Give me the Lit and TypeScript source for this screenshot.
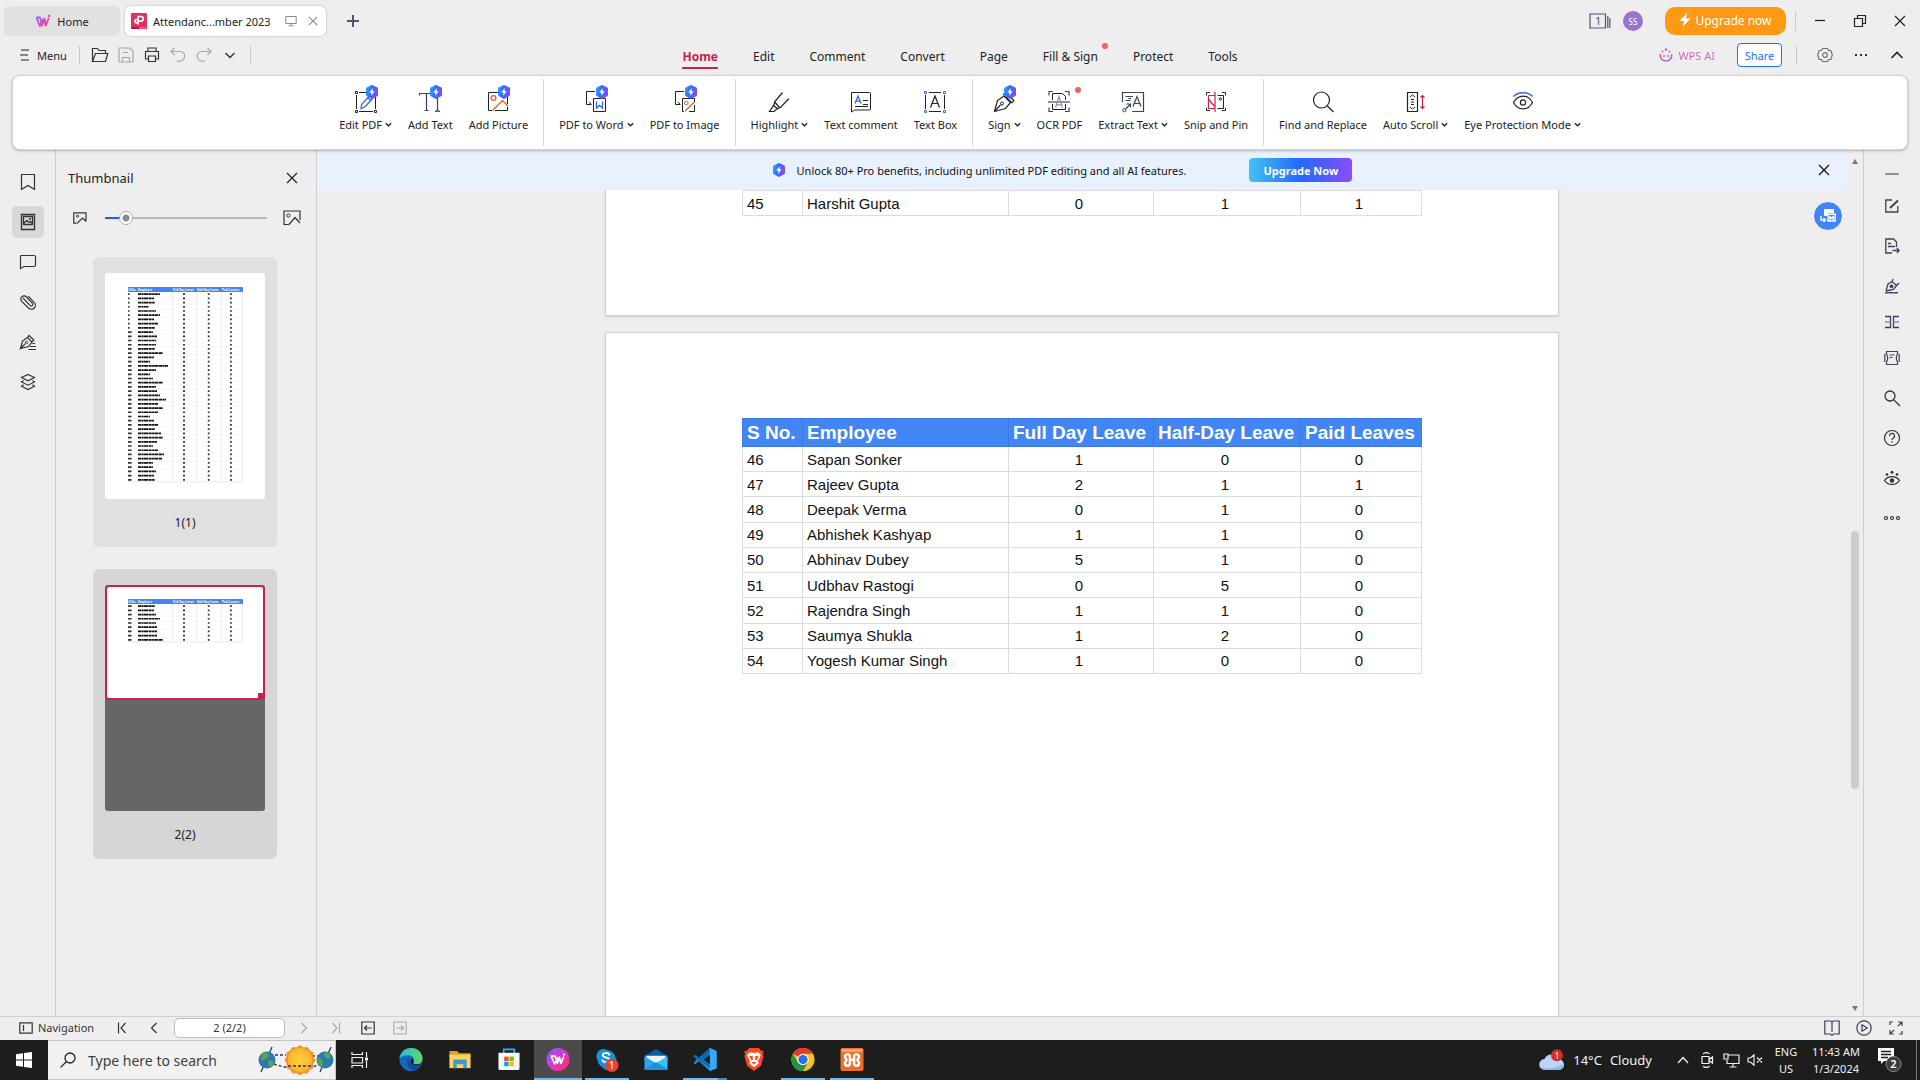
import { LitElement, html, css, svg, nothing, TemplateResult, SVGTemplateResult } from "lit";
import { customElement, property } from "lit/decorators.js";
import { classMap } from "lit/directives/class-map.js";

type Shape = SVGTemplateResult;

interface Command {
  label: string;
  icon: string;
  menu?: boolean;
  pro?: boolean;
  dot?: boolean;
}

interface LeaveRow {
  no: number;
  name: string;
  full: number;
  half: number;
  paid: number;
}

/* Draws a line icon: w x h is both its size on screen and its own coordinate space. */
const draw = (w: number, h: number, body: Shape, cls = "ico"): TemplateResult => html`
  <svg class=${cls} width=${w} height=${h} viewBox="0 0 ${w} ${h}" fill="none" stroke="currentColor" aria-hidden="true">${body}</svg>
`;

const bolt = svg`
  <path d="M7 0.5 L12.5 3 V10.5 L7 13.5 L1.5 10.5 V3 Z" fill="url(#hexfill)" stroke="url(#hexfill)" stroke-width="1" stroke-linejoin="round"/>
  <path d="M7.8 3 L4.2 7.6 H6.4 L6 11 L9.8 6.3 H7.5 Z" fill="#fff" stroke="none"/>
`;

const hexDefs = svg`<defs><linearGradient id="hexfill" x1="0" y1="0" x2="1" y2="0.3">
  <stop offset="0" stop-color="#2fa8ff"/><stop offset="0.5" stop-color="#2d6bff"/><stop offset="1" stop-color="#7a4dff"/>
</linearGradient></defs>`;

const ribbonIcons: Record<string, Shape> = {
  edit: svg`
    <path d="M4.5 10 V24 M7 7.5 H17 M23.5 12 V24 M7 26.5 H21"/>
    <path d="M3.5 6.5 h2 v2 h-2z M3.5 25.5 h2 v2 h-2z M22.5 25.5 h2 v2 h-2z"/>
    <path stroke="#3567e0" stroke-width="1.3" d="M9 23.5 L9.6 19.5 L17.5 11 L20.5 13.5 L12.8 22 Z M16 13 l2.8 2.6"/>`,
  text: svg`
    <path stroke="#39425a" stroke-width="1.2" d="M3.5 10.5 V8.5 H18 M10.5 8.5 V25.5 M8.5 25.5 H12.5"/>
    <path stroke="#39425a" stroke-width="1.2" d="M21.5 12 V25.5 M19 26.5 c1.6 0 2.5 -.6 2.5 -2 c0 1.4 .9 2 2.5 2"/>`,
  picture: svg`
    <path d="M14.5 7.5 H4.5 V25.5 H8 M23.5 12 V19"/>
    <circle cx="9.5" cy="13" r="2.4" stroke="#d9622b" stroke-width="1.3"/>
    <path stroke="#d9622b" stroke-width="1.4" d="M8.5 25.5 L18.5 15.5 L24 21"/><path d="M11 25.5 H23.5 V22"/>`,
  word: svg`
    <path d="M13 6.5 H4.5 V19.5 H9 M7 17 l2.5 2.5 M19.5 6.5 V12"/>
    <path d="M11.5 13.5 H23.5 V26.5 H11.5z"/>
    <path stroke="#3567e0" stroke-width="1.3" d="M14.5 16.5 V23 L17.5 20.4 L20.5 23 V16.5"/>`,
  image: svg`
    <path d="M13 6.5 H4.5 V19.5 H9 M7 17 l2.5 2.5 M19.5 6.5 V12"/>
    <path d="M11.5 13.5 H23.5 V17 M23.5 20 V26.5 H18 M11.5 13.5 V26.5 H13"/>
    <circle cx="15.3" cy="18" r="1.8" stroke="#d9622b"/>
    <path stroke="#d9622b" stroke-width="1.3" d="M14 26 L23.5 17"/>`,
  highlight: svg`
    <path stroke-width="1.2" d="M17.5 7.5 L9.5 17 L9 21 L12.5 23.5 L15.5 22.5 L24 13.5 M9 19.8 L4.5 26.5 H9 L12.5 23.5 M9.8 17 L14.5 22.5"/>`,
  comment: svg`
    <path d="M4.5 7.5 H22.5 a1 1 0 0 1 1 1 V24 a1 1 0 0 1 -1 1 H7.5 L4.5 27 Z"/>
    <path d="M16 15.5 H21 M16 19.5 H21 M8 21.5 H21"/>
    <path stroke="#3567e0" stroke-width="1.3" d="M8 18.5 L11 11 L14 18.5 M9 16.2 H13"/>`,
  textbox: svg`
    <path d="M4.5 10 V24 M8 7.5 H20 M23.5 10 V24 M8 26.5 H20"/>
    <path stroke="#3567e0" d="M3.5 6.5 h2 v2 h-2z M22.5 6.5 h2 v2 h-2z M3.5 25.5 h2 v2 h-2z M22.5 25.5 h2 v2 h-2z"/>
    <path stroke-width="1.2" d="M9.5 22.5 L14 11 L18.5 22.5 M11 18.5 H17"/>`,
  sign: svg`
    <path stroke-width="1.2" d="M4.5 26.5 L7.5 15.5 L14 11 L20.5 17.5 L15.5 23.5 Z M5 26 L10.5 20 M13 9 L22 18 M22 18 L23.8 15.5 L20.5 12"/>
    <circle cx="12" cy="18.5" r="1.5"/>`,
  ocr: svg`
    <path stroke-width="1.2" stroke="#39425a" d="M4 10.5 V6.5 H8 M20 6.5 H24 V10.5 M4 22.5 V26.5 H8 M20 26.5 H24 V22.5"/>
    <path d="M7.5 15 V8.5 H17.5 L20.5 11.5 V15 M7.5 19 V24.5 H20.5 V19"/>
    <path stroke="#8b93a3" stroke-width="2" d="M3 17 H25"/>
    <path stroke="#8b93a3" stroke-width="1.2" d="M10.5 22.5 L14 11.5 L17.5 22.5 M11.5 19.8 H16.5"/>`,
  extract: svg`
    <path stroke="#39425a" stroke-width="1.2" d="M3.5 17 V7.5 H24.5 V26.5 H13"/>
    <path stroke="#39425a" d="M6.5 11.5 H14 M6.5 15.5 H11.5 M9.5 13.5 H12"/>
    <path stroke="#39425a" stroke-width="1.2" d="M14 21.5 L18 11.5 L22 21.5 M15.3 18.5 H20.7 M6.5 24 L11.5 19 M7.5 19 H11.5 V22.5"/>
    <circle cx="5.3" cy="25.2" r="1.6" stroke="#39425a"/>`,
  snip: svg`
    <path stroke="#c7224e" stroke-width="1.2" d="M13 7 V27 M6.5 10.5 H13 M6.5 10.5 V23.5 H13 M6.5 14 L13 22"/>
    <path d="M4.5 10.5 V7.5 H8 M20 7.5 H23.5 V10.5 M4.5 23 V25.5 H8 M20 25.5 H23.5 V23 M15.5 10.5 H21.5 V23.5 H15.5"/>
    <circle cx="18.3" cy="14" r="1.2"/>`,
  find: svg`
    <circle cx="12.5" cy="15" r="8" stroke-width="1.2"/><path stroke-width="1.2" d="M18.2 20.8 L24.5 27"/>`,
  scroll: svg`
    <path stroke-width="1.2" d="M5.5 7.5 H15.5 V26.5 H5.5z"/>
    <path d="M8 12 L10.5 9.8 L13 12 M8 22 L10.5 24.2 L13 22 M9 14.5 H12 M9 17 H12 M9 19.5 H12"/>
    <path stroke="#c7224e" stroke-width="1.2" d="M20.5 11 V23 M18.5 12.5 L20.5 10.5 L22.5 12.5 M18.5 21.5 L20.5 23.5 L22.5 21.5"/>`,
  eye: svg`
    <path stroke="#3567e0" stroke-width="1.4" d="M4.5 11.5 C9 6.5 19 6.5 23.5 11.5"/>
    <path stroke-width="1.2" d="M4.5 17.5 C9 9 19 9 23.5 17.5 C19 26 9 26 4.5 17.5 Z"/>
    <circle cx="14" cy="17.5" r="2.6" stroke-width="1.2"/>`,
};

const icons = {
  close: draw(12, 12, svg`<path stroke-width="1.2" d="M1 1 L11 11 M11 1 L1 11"/>`),
  closeSmall: draw(10, 10, svg`<path stroke-width="1.1" d="M.8 .8 L9.2 9.2 M9.2 .8 L.8 9.2"/>`),
  chevDown: draw(12, 12, svg`<path stroke-width="1.4" d="M1.5 4 L6 8.5 L10.5 4"/>`),
  chevUp: draw(14, 12, svg`<path stroke-width="1.6" d="M1.5 9 L7 3.5 L12.5 9"/>`),
  caret: draw(7, 6, svg`<path stroke-width="1.3" d="M.8 1.2 L3.5 3.8 L6.2 1.2"/>`),
  bookmark: draw(18, 18, svg`<path stroke-width="1.2" d="M2.5 1.5 H15.5 V16.5 L9 12.5 L2.5 16.5 Z"/>`),
  thumbs: draw(18, 18, svg`<path stroke-width="1.3" d="M2.5 1.5 H15.5 V16.5 H2.5z M4.5 3.5 H13.5 V11.5 H4.5z M4.5 10.5 L8 7.5 L10 9.5 L11.5 8.5 L13.5 10.5"/><circle cx="11" cy="6" r=".7"/>`),
  bubble: draw(18, 18, svg`<path stroke-width="1.2" d="M2.5 2.5 H15 a1.5 1.5 0 0 1 1.5 1.5 V12 a1.5 1.5 0 0 1 -1.5 1.5 H5 L1.5 15.5 V3.5 a1 1 0 0 1 1 -1z"/>`),
  clip: draw(18, 18, svg`<path stroke-width="1.2" d="M4 5 L11.2 12.6 a1.6 1.6 0 0 0 2.3 -2.2 L7.5 4 a3.2 3.2 0 0 0 -4.8 4.4 L9.5 15 a3.9 3.9 0 0 0 5.8 -5.4 L9.2 3.2"/>`),
  signPen: draw(18, 18, svg`<path stroke-width="1.2" d="M1.5 15.5 L3.5 8 L8.5 4.5 L13 9 L9.5 13.5 L1.5 15.5 L6 11 M8.5 4.5 L10 2.5 L14.8 7 L13 9 M11 13.5 H17 M9.5 16.5 H17 M13.5 10.5 H16"/><circle cx="7.5" cy="9.5" r="1.2"/>`),
  layers: draw(18, 18, svg`<path stroke-width="1.2" d="M9 1.5 L15.5 4.5 L9 7.8 L2.5 4.5 Z M4.5 7.5 L2.5 9 L9 12.2 L15.5 9 L13.5 7.5 M4.5 11.8 L2.5 13.2 L9 16.5 L15.5 13.2 L13.5 11.8"/>`),
  imgSmall: draw(14, 12, svg`<path stroke-width="1.2" d="M13 9 V.8 H.8 V11.2 H3.5 M4 11.4 L9.5 6 L13.2 9.5"/><circle cx="4.6" cy="4.2" r="1.1"/>`),
  imgLarge: draw(18, 16, svg`<path stroke-width="1.2" d="M17 10 V1 H1 V14.5 H5 M5.5 15 L12 7.5 L17 13"/><circle cx="5.5" cy="5.5" r="1.6"/>`),
  plus: draw(14, 14, svg`<path stroke="#4a5878" stroke-width="2" d="M7 1 V13 M1 7 H13"/>`),
  monitor: draw(12, 12, svg`<path d="M.8 1.5 H11.2 V8.5 H.8z M6 8.5 V10.5 M3.5 10.8 H8.5"/>`),
  menu: draw(10, 12, svg`<path stroke-width="1.2" d="M1 1 H9 M0 6 H8 M1 11 H9"/>`),
  open: draw(18, 16, svg`<path stroke-width="1.2" d="M1.5 14 V1.5 H6.5 L8 3.5 H14.5 V6.5 M1.5 14.5 L4.5 6.5 H16.8 L14.5 14.5 Z"/>`),
  save: draw(18, 16, svg`<path stroke-width="1.2" d="M2 1 H13 L16 4 V15 H2z M5.5 15 V10.5 H12.5 V15 M6 5.5 H11"/>`),
  print: draw(18, 16, svg`<path stroke-width="1.2" d="M5 4.5 V1 H13 V4.5 M5 12 H2.5 V4.5 H15.5 V12 H13 M5.5 9 H12.5 V14.5 H5.5z"/>`),
  undo: draw(18, 16, svg`<path stroke-width="1.2" d="M5.5 1 L2 4.5 L5.5 8 M2 4.5 H11 a4.8 4.8 0 0 1 0 9.6 H8"/>`),
  redo: draw(18, 16, svg`<path stroke-width="1.2" d="M12.5 1 L16 4.5 L12.5 8 M16 4.5 H7 a4.8 4.8 0 0 0 0 9.6 H10"/>`),
  minimize: draw(12, 12, svg`<path stroke-width="1.2" d="M1 5.5 H11"/>`),
  restore: draw(14, 14, svg`<path stroke-width="1.2" d="M1.5 4.5 H9.5 V12.5 H1.5z M4.5 4 V1.5 H12.5 V9.5 H10"/>`),
  gear: draw(16, 16, svg`<path stroke="#6a7080" stroke-width="1.2" d="M5.5 1.5 H10.5 L11.5 3.5 H13.8 L15.3 8 L13.8 12.5 H11.5 L10.5 14.5 H5.5 L4.5 12.5 H2.2 L.7 8 L2.2 3.5 H4.5 Z"/><circle cx="8" cy="8" r="2.3" stroke="#6a7080" stroke-width="1.2"/>`),
  dots: draw(14, 4, svg`<path stroke="none" fill="#333" d="M1 1 h2 v2 h-2z M6 1 h2 v2 h-2z M11 1 h2 v2 h-2z"/>`),
  flash: draw(12, 14, svg`<path stroke="none" fill="#fff" d="M8 0 L0.5 8 H5 L3.5 14 L11.5 5.5 H7 Z"/>`),
  wpsAi: draw(14, 14, svg`
    <defs><linearGradient id="ai" x1="0" y1="0" x2="1" y2="1"><stop offset="0" stop-color="#f2616f"/><stop offset="1" stop-color="#8a6bf5"/></linearGradient></defs>
    <path stroke="url(#ai)" stroke-width="1.6" d="M1.5 6 C.5 10 3.5 13 7 13 C10.5 13 13.5 10 12.5 6"/>
    <g stroke="none" fill="#d060b8"><circle cx="5" cy="8" r="1"/><circle cx="9" cy="8" r="1"/><circle cx="3.5" cy="3.5" r="1"/><circle cx="10.5" cy="3.5" r="1"/><circle cx="7" cy="1.5" r="1.3"/></g>`),
  wpsLogo: draw(16, 14, svg`
    <defs><linearGradient id="wl" x1="0" y1="0" x2="1" y2="1"><stop offset="0" stop-color="#7d6bff"/><stop offset="0.5" stop-color="#d94fd0"/><stop offset="1" stop-color="#ff3b4e"/></linearGradient></defs>
    <path stroke="url(#wl)" stroke-width="1.9" stroke-linejoin="round" d="M1.2 3.5 H5 L7 11.5 L9.5 4.5 L10.8 11.5 L13.8 4 M1.5 3.8 L4.8 12 L8 5"/>
    <circle cx="14" cy="2" r="1.3" fill="#f2478a" stroke="none"/>`),
  pdf: draw(16, 16, svg`
    <path stroke="none" fill="#e0315c" d="M1 0 H15 a1 1 0 0 1 1 1 V14 H0 V1 a1 1 0 0 1 1 -1z"/>
    <path stroke="none" fill="#b8153f" d="M0 14 H8 V16 H1 a1 1 0 0 1 -1 -1z"/><path stroke="none" fill="#ff4d78" d="M8 14 H16 a1 1 0 0 1 -1 2 H8z"/>
    <path stroke="#fff" stroke-width="1.6" d="M7 11.5 V3.5 H10 a2.3 2.3 0 0 1 0 4.6 H7 M7 6.5 H5.5 a1.7 1.7 0 1 0 1.5 2.5"/>`),
  windows: draw(22, 16, svg`<path stroke="#4a5878" stroke-width="1.2" d="M1 1 H16.5 V15 H1z M18.8 3 V15 M20.8 5 V15"/>`),
  nav: draw(14, 12, svg`<path stroke-width="1.2" d="M.8 .8 H13.2 V11.2 H.8z M4.5 3 V9"/>`),
  first: draw(10, 12, svg`<path stroke-width="1.2" d="M1.5 .5 V11.5 M8.5 1 L4 6 L8.5 11"/>`),
  prev: draw(10, 12, svg`<path stroke-width="1.2" d="M7.5 1 L2.5 6 L7.5 11"/>`),
  next: draw(10, 12, svg`<path stroke-width="1.2" d="M2.5 1 L7.5 6 L2.5 11"/>`),
  last: draw(10, 12, svg`<path stroke-width="1.2" d="M8.5 .5 V11.5 M1.5 1 L6 6 L1.5 11"/>`),
  back: draw(14, 14, svg`<path stroke-width="1.2" d="M.8 1 H13.2 V13 H.8z M10.5 7 H3.5 M6 4.5 L3.5 7 L6 9.5"/>`),
  forward: draw(14, 14, svg`<path stroke-width="1.2" d="M.8 1 H13.2 V13 H.8z M3.5 7 H10.5 M8 4.5 L10.5 7 L8 9.5"/>`),
  book: draw(16, 16, svg`<path stroke-width="1.2" d="M.8 1 H6.5 L8 2 L9.5 1 H15.2 V14 H9.5 L8 15.2 L6.5 14 H.8z M8 2 V12"/>`),
  play: draw(16, 16, svg`<circle cx="8" cy="8" r="7.2" stroke-width="1.2"/><path stroke-width="1.2" d="M6 4.8 L11.2 8 L6 11.2 Z"/>`),
  expand: draw(14, 14, svg`<path stroke-width="1.2" d="M9 1 H13 V5 M13 1 L8.8 5.2 M5 13 H1 V9 M1 13 L5.2 8.8 M1 4 V1 H4 M13 10 V13 H10"/>`),
  dash: draw(14, 2, svg`<path stroke="#8a8f99" stroke-width="2" d="M0 1 H14"/>`),
  rEdit: draw(16, 16, svg`<path stroke-width="1.3" d="M8 2 H1.8 V14 H13.8 V8"/><path stroke-width="2" d="M6 10 L14 2.5"/>`),
  rExport: draw(16, 16, svg`<path stroke-width="1.3" d="M8 15 H1.8 V1 H9.5 L12.5 4 V9 M4 5.5 H7 M4 8.5 H11 M8.5 12.5 H15 M12.8 10 L15.2 12.5 L12.8 15"/>`),
  rPen: draw(16, 16, svg`<path stroke-width="1.3" d="M2 13 L4 6 L8 3.5 L12.5 7.5 L9.5 11.5 L2 13 M8 3.5 L9 1 M12.5 7.5 L15 5 M1 15 C6 14 9 15.5 14 14.5"/><circle cx="7.5" cy="8.3" r="1.5" fill="currentColor"/>`),
  rSplit: draw(16, 14, svg`<path stroke-width="1.3" d="M1 1.5 H6.5 V12.5 H1 M15 1.5 H9.5 V12.5 H15"/><path stroke="#8a93a6" stroke-width="1.6" d="M1 7 H6.5 M9.5 7 H15"/>`),
  rFrame: draw(16, 16, svg`<path stroke-width="1.2" d="M2.5 4 V1.5 H13.5 V4 M2.5 12 V14.5 H13.5 V12 M5.5 5 H10.5 M5.5 7.5 H8.5 M2.5 4 C4 6.5 4 9.5 2.5 12 M13.5 4 C12 6.5 12 9.5 13.5 12 M.8 4 V12 M15.2 4 V12"/>`),
  rSearch: draw(18, 18, svg`<circle cx="7" cy="7" r="5" stroke-width="1.3"/><path stroke-width="1.3" d="M10.6 10.6 L17 17"/>`),
  rHelp: draw(18, 18, svg`<circle cx="9" cy="9" r="7.5" stroke-width="1.2"/><path stroke-width="1.2" d="M6.5 7 a2.5 2.5 0 1 1 3.6 2.2 c-.8 .4 -1.1 .8 -1.1 1.8 M9 12.3 V13.8"/>`),
  rEye: draw(18, 18, svg`<path stroke-width="1.3" d="M1.5 11.5 C5 6.3 13 6.3 16.5 11.5 C13 16.7 5 16.7 1.5 11.5 Z"/><g stroke="none" fill="currentColor"><circle cx="9" cy="11.5" r="2.2"/><circle cx="9" cy="3.2" r="1.5"/><circle cx="4" cy="5.5" r="1.3"/><circle cx="14" cy="5.5" r="1.3"/></g>`),
  rDots: draw(18, 6, svg`<g stroke-width="1.2"><circle cx="3" cy="3" r="1.5"/><circle cx="9" cy="3" r="1.5"/><circle cx="15" cy="3" r="1.5"/></g>`),
  toWord: draw(16, 14, svg`<path stroke="none" fill="#fff" d="M4 0 H14 V4 H8 V7 H4z"/><path stroke="#fff" stroke-width="1.4" d="M8 5.2 H15.2 V12 H8z M10 7 V10 L11.6 8.6 L13.2 10 V7 M1 7 V11 H5 M3.5 9 L5.5 11 L3.5 13"/>`),
};

const rows: LeaveRow[] = [
  { no: 46, name: "Sapan Sonker", full: 1, half: 0, paid: 0 },
  { no: 47, name: "Rajeev Gupta", full: 2, half: 1, paid: 1 },
  { no: 48, name: "Deepak Verma", full: 0, half: 1, paid: 0 },
  { no: 49, name: "Abhishek Kashyap", full: 1, half: 1, paid: 0 },
  { no: 50, name: "Abhinav Dubey", full: 5, half: 1, paid: 0 },
  { no: 51, name: "Udbhav Rastogi", full: 0, half: 5, paid: 0 },
  { no: 52, name: "Rajendra Singh", full: 1, half: 1, paid: 0 },
  { no: 53, name: "Saumya Shukla", full: 1, half: 2, paid: 0 },
  { no: 54, name: "Yogesh Kumar Singh", full: 1, half: 0, paid: 0 },
];
const lastOfFirstPage: LeaveRow[] = [{ no: 45, name: "Harshit Gupta", full: 0, half: 1, paid: 1 }];

/* Lengths of the name strokes in the page previews. */
const firstPreview = [22, 16, 17, 11, 18, 22, 16, 20, 17, 15, 19, 18, 18, 17, 25, 16, 12, 30, 18, 12, 15, 25, 18, 19, 22, 28, 20, 25, 20, 12, 16, 20, 17, 23, 25, 19, 15, 20, 26, 24, 15, 15, 18, 16, 17];
const secondPreview = [17, 16, 18, 22, 18, 19, 19, 19, 25];

const base = css`
  * { box-sizing: border-box; }
  button, input { font: inherit; color: inherit; }
  button {
    display: inline-flex; align-items: center; justify-content: center;
    padding: 0; border: 0; background: none; cursor: pointer; white-space: nowrap;
  }
  .ico { display: block; flex: none; }
  .badge { font-family: "Noto Sans", sans-serif; fill: #fff; stroke: none; text-anchor: middle; }
`;

@customElement("title-bar")
export class TitleBar extends LitElement {
  static styles = [base, css`
    :host { display: flex; align-items: center; height: 40px; padding: 2px 12px 0 4px; }
    .tab { height: 30px; border-radius: 6px; gap: 6px; }
    .home { width: 116px; background: #e1e1e1; margin-right: 5px; }
    .file { display: flex; align-items: center; width: 201px; padding: 0 5px 0 6px; background: #fff; box-shadow: 0 0 2px rgba(0, 0, 0, 0.3); color: #8a8a8a; }
    .name { color: #222; flex: 1; white-space: nowrap; }
    .x { width: 16px; height: 18px; }
    .add { width: 30px; height: 30px; margin-left: 12px; }
    .right { display: flex; align-items: center; margin-left: auto; }
    .count { display: grid; place-items: center; margin-right: 12px; color: #4a5878; font-size: 11px; }
    .count > * { grid-area: 1 / 1; }
    .digit { justify-self: start; padding-left: 6px; line-height: 16px; }
    .avatar { width: 20px; height: 20px; border-radius: 50%; background: #9575cd; color: #fff; font-size: 8px; margin-right: 22px; }
    .upgrade { height: 28px; width: 121px; gap: 4px; border-radius: 10px; background: #ff9812; color: #fff; font-size: 12px; padding-bottom: 2px; }
    .sep { width: 1px; height: 20px; background: #ccc; margin: 0 4px 0 9px; }
    .win { width: 40px; height: 30px; color: #222; }
    .win:last-child { margin-right: -12px; }
  `];
  render() {
    return html`
      <button class="tab home">${icons.wpsLogo}<span>Home</span></button>
      <div class="tab file">
        ${icons.pdf}<span class="name">Attendanc...mber 2023</span>
        <button class="x" aria-label="Display">${icons.monitor}</button>
        <button class="x" aria-label="Close tab">${icons.closeSmall}</button>
      </div>
      <button class="add" aria-label="New tab">${icons.plus}</button>
      <div class="right">
        <button class="count" aria-label="Open windows">${icons.windows}<span class="digit">1</span></button>
        <button class="avatar">SS</button>
        <button class="upgrade">${icons.flash}Upgrade now</button>
        <span class="sep"></span>
        <button class="win" aria-label="Minimize">${icons.minimize}</button>
        <button class="win" aria-label="Restore">${icons.restore}</button>
        <button class="win" aria-label="Close">${icons.close}</button>
      </div>
    `;
  }
}

@customElement("menu-bar")
export class MenuBar extends LitElement {
  static styles = [base, css`
    :host { display: grid; grid-template-columns: 1fr auto 1fr; height: 35px; }
    .side { display: flex; align-items: center; padding-bottom: 5px; }
    .left { padding-left: 20px; }
    .menu { gap: 7px; width: 47px; margin-right: 12px; }
    .sep { width: 1px; height: 18px; background: #c8c8c8; }
    .tools { display: flex; margin: 0 7px; }
    .tool { width: 26px; height: 26px; color: #333; }
    .tool:disabled { color: #aaa; }
    .tabs { display: flex; gap: 35px; padding-top: 7px; align-items: flex-start; font-size: 12px; }
    .tab { position: relative; line-height: 20px; padding-bottom: 2px; }
    .on { color: #c7224e; font-weight: 700; padding: 0; border-bottom: 2px solid #c7224e; border-radius: 1px; }
    .dot { position: absolute; right: -10px; top: -4px; width: 6px; height: 6px; border-radius: 50%; background: #f0625f; }
    .right { justify-content: flex-end; padding-right: 5px; }
    .ai { gap: 5px; margin-right: 22px; }
    .aitext { background: linear-gradient(90deg, #e060a0, #b070e0); -webkit-background-clip: text; color: transparent; }
    .share { width: 45px; height: 24px; border: 1px solid #1a6dff; border-radius: 4px; background: #fff; color: #1a6dff; margin-right: 14px; }
    .r { width: 36px; height: 26px; color: #222; }
    .gear { margin-left: 10px; }
  `];
  render() {
    const tabs = ["Home", "Edit", "Comment", "Convert", "Page", "Fill & Sign", "Protect", "Tools"];
    return html`
      <div class="side left">
        <button class="menu">${icons.menu}Menu</button>
        <span class="sep"></span>
        <div class="tools">
          <button class="tool" aria-label="Open">${icons.open}</button>
          <button class="tool" aria-label="Save" disabled>${icons.save}</button>
          <button class="tool" aria-label="Print">${icons.print}</button>
          <button class="tool" aria-label="Undo" disabled>${icons.undo}</button>
          <button class="tool" aria-label="Redo" disabled>${icons.redo}</button>
          <button class="tool" aria-label="More quick tools">${icons.chevDown}</button>
        </div>
        <span class="sep"></span>
      </div>
      <nav class="tabs">
        ${tabs.map((t, i) => html`<button class=${classMap({ tab: true, on: i === 0 })}>${t}${t === "Fill & Sign" ? html`<span class="dot"></span>` : nothing}</button>`)}
      </nav>
      <div class="side right">
        <button class="ai">${icons.wpsAi}<span class="aitext">WPS AI</span></button>
        <button class="share">Share</button>
        <span class="sep"></span>
        <button class="r gear" aria-label="Settings">${icons.gear}</button>
        <button class="r" aria-label="More">${icons.dots}</button>
        <button class="r" aria-label="Collapse ribbon">${icons.chevUp}</button>
      </div>
    `;
  }
}

@customElement("tool-ribbon")
export class ToolRibbon extends LitElement {
  static styles = [base, css`
    :host { display: flex; justify-content: center; margin: 0 12px; background: #fff; border: 1px solid #d4d4d4; border-radius: 8px; box-shadow: 0 1px 3px rgba(0, 0, 0, 0.25); position: relative; z-index: 1; }
    .group { display: flex; margin: 3px 0; padding: 0 7px; }
    .group + .group { border-left: 1px solid #d8d8d8; }
    .cmd { position: relative; flex-direction: column; justify-content: flex-start; gap: 4px; padding: 6px 8px 13px; }
    .label { display: flex; align-items: center; gap: 3px; line-height: 16px; }
    .dot { position: absolute; top: 8px; left: 50%; margin-left: 16px; width: 6px; height: 6px; border-radius: 50%; background: #f0625f; }
  `];
  private groups: Command[][] = [
    [
      { label: "Edit PDF", icon: "edit", menu: true, pro: true },
      { label: "Add Text", icon: "text", pro: true },
      { label: "Add Picture", icon: "picture", pro: true },
    ],
    [
      { label: "PDF to Word", icon: "word", menu: true, pro: true },
      { label: "PDF to Image", icon: "image", pro: true },
    ],
    [
      { label: "Highlight", icon: "highlight", menu: true },
      { label: "Text comment", icon: "comment" },
      { label: "Text Box", icon: "textbox" },
    ],
    [
      { label: "Sign", icon: "sign", menu: true, pro: true },
      { label: "OCR PDF", icon: "ocr", dot: true },
      { label: "Extract Text", icon: "extract", menu: true },
      { label: "Snip and Pin", icon: "snip" },
    ],
    [
      { label: "Find and Replace", icon: "find" },
      { label: "Auto Scroll", icon: "scroll", menu: true },
      { label: "Eye Protection Mode", icon: "eye", menu: true },
    ],
  ];
  render() {
    return this.groups.map((g) => html`<div class="group">${g.map((c) => html`
      <button class="cmd">
        ${draw(28, 28, svg`${hexDefs}${ribbonIcons[c.icon]}${c.pro ? svg`<g transform="translate(13 0)">${bolt}</g>` : nothing}`)}
        <span class="label">${c.label}${c.menu ? icons.caret : nothing}</span>
        ${c.dot ? html`<span class="dot"></span>` : nothing}
      </button>`)}</div>`);
  }
}

@customElement("page-preview")
export class PagePreview extends LitElement {
  @property({ type: Number }) page = 1;
  @property({ type: Boolean, reflect: true }) current = false;
  @property({ attribute: false }) lengths: number[] = [];
  static styles = [base, css`
    .card { display: flex; flex-direction: column; align-items: center; gap: 16px; width: 184px; padding: 16px 12px; border-radius: 6px; background: #e0e0e0; }
    .sheet { position: relative; width: 160px; height: 226px; border-radius: 3px; background: #fff; overflow: hidden; }
    .current { background: #d6d6d6; }
    .current .sheet { background: #666; }
    .view { position: absolute; inset: 0 0 auto 0; height: 115px; border: 2px solid #c7224e; border-radius: 4px; background: #fff; }
    .grip { position: absolute; right: 0; bottom: 0; width: 5px; height: 5px; background: #c7224e; }
    .map { position: absolute; inset: 0; display: block; }
    .head { font: bold 3px "Liberation Sans", sans-serif; }
    .caption { line-height: 16px; font-size: 12px; color: #222; }
  `];
  render() {
    const step = 4.22;
    const end = 19 + this.lengths.length * step;
    return html`
      <button class=${classMap({ card: true, current: this.current })}>
        <div class="sheet">
          ${this.current ? html`<div class="view"><span class="grip"></span></div>` : nothing}
          <svg class="map" width="160" height="226" viewBox="0 0 160 226" aria-hidden="true">
            <rect x="23" y="14" width="115" height="5" fill="#4285f4"/>
            <g class="head" fill="#fff">
              <text x="23.5" y="17.6">S No.</text><text x="33" y="17.6">Employee</text><text x="68" y="17.6">Full Day Leave</text>
              <text x="92" y="17.6">Half-Day Leave</text><text x="117" y="17.6">Paid Leaves</text>
            </g>
            <path stroke="#ececec" d="M67.5 19 V${end} M91.5 19 V${end} M116.5 19 V${end} M137.5 19 V${end} M23 ${end} H137"/>
            ${this.lengths.map((n, i) => {
              const y = 21.1 + i * step;
              return svg`
                <path stroke="#f0f0f0" stroke-width=".5" d="M23 ${y + 2} H137"/>
                <path stroke="#111" stroke-width="1.7" stroke-dasharray="3.2 .4 2 .3 4.1 .5" d="M33 ${y} h${n}"/>
                <path stroke="#333" stroke-width="1.7" d="M23 ${y} h${i + (this.page - 1) * 45 < 9 ? 1.6 : 3.6} M78 ${y} h2 M102.8 ${y} h1.8 M125 ${y} h1.8"/>`;
            })}
          </svg>
        </div>
        <span class="caption">${this.page}(${this.page})</span>
      </button>
    `;
  }
}

@customElement("side-panel")
export class SidePanel extends LitElement {
  static styles = [base, css`
    :host { display: flex; flex: none; }
    .rail { display: flex; flex-direction: column; gap: 8px; width: 56px; padding: 16px 12px; border-right: 1px solid #d0d0d0; }
    .item { width: 32px; height: 32px; border-radius: 5px; color: #333; }
    .on { background: #d8d8d8; }
    .panel { width: 261px; border-right: 1px solid #d0d0d0; }
    .head { display: flex; align-items: center; justify-content: space-between; height: 56px; padding: 0 18px 0 12px; font-size: 13px; color: #222; }
    .x { width: 12px; height: 12px; }
    .zoom { display: flex; align-items: center; justify-content: space-between; height: 24px; padding: 0 15px 0 17px; color: #333; }
    .range { appearance: none; -webkit-appearance: none; width: 162px; height: 14px; margin: 0 0 0 1px; background: linear-gradient(90deg, #1f5be8 14%, #b8b8b8 14%) center / 100% 2px no-repeat; }
    .range::-webkit-slider-thumb { -webkit-appearance: none; width: 14px; height: 14px; border-radius: 50%; border: 1px solid #aaa; background: radial-gradient(circle, #8c8c8c 0 3px, #fff 4px); }
    .list { display: flex; flex-direction: column; align-items: center; gap: 22px; padding: 27px 2px 0 0; }
  `];
  render() {
    const items: [string, TemplateResult][] = [
      ["Bookmarks", icons.bookmark], ["Thumbnails", icons.thumbs], ["Comments", icons.bubble],
      ["Attachments", icons.clip], ["Signatures", icons.signPen], ["Layers", icons.layers],
    ];
    return html`
      <nav class="rail">${items.map(([l, i], n) => html`<button class=${classMap({ item: true, on: n === 1 })} aria-label=${l}>${i}</button>`)}</nav>
      <section class="panel">
        <header class="head"><span>Thumbnail</span><button class="x" aria-label="Close panel">${icons.close}</button></header>
        <div class="zoom">${icons.imgSmall}<input class="range" type="range" min="0" max="100" value="10" aria-label="Thumbnail size">${icons.imgLarge}</div>
        <div class="list">
          <page-preview .page=${1} .lengths=${firstPreview}></page-preview>
          <page-preview .page=${2} .lengths=${secondPreview} current></page-preview>
        </div>
      </section>
    `;
  }
}

@customElement("doc-viewer")
export class DocViewer extends LitElement {
  static styles = [base, css`
    :host { display: grid; grid-template: auto minmax(0, 1fr) / minmax(0, 1fr) 17px; flex: 1; min-width: 0; position: relative; }
    .banner { display: flex; align-items: center; justify-content: center; height: 40px; padding: 0 16px 0 8px; background: #eaf1fe; color: #111; }
    .offer { display: flex; align-items: center; gap: 11px; margin: 0 auto; padding-right: 18px; }
    .buy { width: 103px; height: 24px; margin-left: 52px; border-radius: 4px; color: #fff; font-weight: 700; font-size: 11px; background: linear-gradient(90deg, #43c2f0, #2468ff 50%, #8a4df8); }
    .x { width: 14px; height: 14px; }
    .bar { grid-row: 1 / 3; grid-column: 2; display: flex; flex-direction: column; align-items: center; padding: 9px 0 5px; border-right: 1px solid #d0d0d0; }
    .track { display: flex; flex: 1; flex-direction: column; align-items: center; }
    .before { flex: 44; }
    .grip { flex: 31; width: 8px; border-radius: 4px; background: #cdcdcd; }
    .after { flex: 26; }
    .pages { overflow: hidden; display: flex; flex-direction: column; align-items: center; gap: 16px; }
    .page { flex: none; width: 100%; max-width: 954px; padding: 85px 136px; background: #fff; border: 1px solid #d0d0d0; box-shadow: 0 1px 2px rgba(0, 0, 0, 0.12); }
    .top { padding: 0 136px 99px; border-top: 0; }
    .rest { min-height: 100%; }
    table { width: 100%; border-collapse: collapse; table-layout: fixed; font: 15px "Liberation Sans", Arial, sans-serif; color: #111; }
    .full { height: 256px; }
    th, td { padding: 0 6px 0 2px; border: 1px solid #dcdcdc; text-align: center; white-space: nowrap; }
    td { height: 25px; }
    th { height: 28px; padding: 0 0 0 4px; text-align: left; font-size: 19px; background: #4285f4; color: #fff; border-color: #3b78e0; }
    .l { text-align: left; padding: 0 4px; }
    .c1 { width: 60px; } .c2 { width: 206px; } .c3 { width: 145px; } .c4 { width: 147px; } .c5 { width: 121px; }
    .convert { position: absolute; right: 21px; top: 51px; width: 30px; height: 30px; border-radius: 50%; border: 1px solid #fff; background: #4285f4; }
  `];
  private table(data: LeaveRow[], head: boolean) {
    return html`
      <table class=${head ? "full" : ""}>
        <colgroup><col class="c1"><col class="c2"><col class="c3"><col class="c4"><col class="c5"></colgroup>
        ${head ? html`<thead><tr><th>S No.</th><th>Employee</th><th>Full Day Leave</th><th>Half-Day Leave</th><th>Paid Leaves</th></tr></thead>` : nothing}
        <tbody>${data.map((r) => html`<tr><td class="l">${r.no}</td><td class="l">${r.name}</td><td>${r.full}</td><td>${r.half}</td><td>${r.paid}</td></tr>`)}</tbody>
      </table>`;
  }
  render() {
    return html`
      <div class="banner">
        <div class="offer">
          ${draw(14, 14, svg`${hexDefs}${bolt}`)}
          <span>Unlock 80+ Pro benefits, including unlimited PDF editing and all AI features.</span>
          <button class="buy">Upgrade Now</button>
        </div>
        <button class="x" aria-label="Dismiss">${icons.close}</button>
      </div>
      <div class="bar" aria-hidden="true">
        ${draw(6, 5, svg`<path stroke="none" fill="#777" d="M3 0 L6 5 H0z"/>`)}
        <div class="track"><span class="before"></span><span class="grip"></span><span class="after"></span></div>
        ${draw(6, 5, svg`<path stroke="none" fill="#777" d="M3 5 L6 0 H0z"/>`)}
      </div>
      <main class="pages">
        <article class="page top">${this.table(lastOfFirstPage, false)}</article>
        <article class="page rest">${this.table(rows, true)}</article>
      </main>
      <button class="convert" aria-label="Convert to Word">${icons.toWord}</button>
    `;
  }
}

@customElement("tool-rail")
export class ToolRail extends LitElement {
  static styles = [base, css`
    :host { display: flex; flex-direction: column; align-items: center; flex: none; width: 56px; padding-top: 12px; color: #39425a; }
    .b { width: 40px; height: 40px; }
    .s { height: 24px; }
    .m { height: 32px; }
    .dark { color: #333; }
  `];
  render() {
    const list: [string, TemplateResult, string][] = [
      ["Collapse", icons.dash, "b s"], ["Edit", icons.rEdit, "b"], ["Export", icons.rExport, "b"], ["Sign", icons.rPen, "b"],
      ["Split", icons.rSplit, "b m"], ["Compress", icons.rFrame, "b"], ["Search", icons.rSearch, "b dark"],
      ["Help", icons.rHelp, "b dark"], ["Eye care", icons.rEye, "b dark"], ["More", icons.rDots, "b dark"],
    ];
    return list.map(([l, i, c]) => html`<button class=${c} aria-label=${l}>${i}</button>`);
  }
}

@customElement("status-bar")
export class StatusBar extends LitElement {
  static styles = [base, css`
    :host { display: flex; align-items: center; height: 24px; padding: 0 8px 2px 19px; border-top: 1px solid #d0d0d0; color: #333; box-sizing: border-box; }
    .nav { gap: 5px; width: 78px; justify-content: flex-start; }
    .b { width: 32px; height: 20px; }
    .start { margin-left: 9px; }
    .b:disabled { color: #aaa; }
    .num { width: 111px; height: 20px; margin: 0 3px 0 4px; padding: 0; border: 1px solid #bbb; border-radius: 5px; background: #fff; text-align: center; }
    .right { display: flex; margin-left: auto; color: #39425a; }
  `];
  render() {
    return html`
      <button class="nav">${icons.nav}Navigation</button>
      <button class="b start" aria-label="First page">${icons.first}</button>
      <button class="b" aria-label="Previous page">${icons.prev}</button>
      <input class="num" aria-label="Page" .value=${"2 (2/2)"}>
      <button class="b" aria-label="Next page" disabled>${icons.next}</button>
      <button class="b" aria-label="Last page" disabled>${icons.last}</button>
      <button class="b" aria-label="Back">${icons.back}</button>
      <button class="b" aria-label="Forward" disabled>${icons.forward}</button>
      <div class="right">
        <button class="b" aria-label="Reading view">${icons.book}</button>
        <button class="b" aria-label="Play">${icons.play}</button>
        <button class="b" aria-label="Full screen">${icons.expand}</button>
      </div>
    `;
  }
}

const apps: { name: string; state?: string; art: Shape }[] = [
  { name: "Edge", art: svg`
    <defs><linearGradient id="e1" x1="0" y1="0" x2="1" y2="0"><stop offset="0" stop-color="#2ab4e8"/><stop offset="1" stop-color="#5fdc5a"/></linearGradient></defs>
    <circle cx="12" cy="12" r="12" fill="#1468c0"/>
    <path fill="url(#e1)" d="M0 11 C1 4 6 0 12 0 C19 0 24 5 24 11 C24 15 21 17 17.5 17 C15 17 14 16 14.5 15 C16.5 12 14 7.5 9.5 7.5 C5 7.5 1.5 9 0 11z"/>
    <path fill="#0d4f9e" d="M9 10 C6 13 7.5 20 13 23 C17 24 21 21 22.5 18 C16 21 10.5 17 9 10z"/>
    <path fill="#1d1d1d" d="M12.5 11 C10.5 13 11.5 17.5 17 18.3 C20 18.5 22.5 17.3 23.2 15.5 C21.5 17 19.5 17 17.5 17 C14.6 17 14 16 14.5 15 C15.3 13.5 14.5 11 12.5 11z"/>` },
  { name: "File Explorer", art: svg`
    <path fill="#e0a021" d="M1 3 H9 L11 5.5 H23 V9 H1z"/><path fill="#ffd45c" d="M1 7 H23 V21 H1z"/>
    <path fill="#3f96dd" d="M5 13 a1 1 0 0 1 1 -1 H18 a1 1 0 0 1 1 1 V21 H15.5 V17 H8.5 V21 H5z"/>` },
  { name: "Microsoft Store", art: svg`
    <path fill="none" stroke="#28b4ec" stroke-width="1.8" d="M6.5 6 V1.5 H17.5 V6"/><path fill="#f5f5f5" d="M1 5 H23 V21 a2 2 0 0 1 -2 2 H3 a2 2 0 0 1 -2 -2z"/>
    <path fill="#f25022" d="M7 9 h4.6 v4.6 H7z"/><path fill="#7fba00" d="M12.4 9 h4.6 v4.6 h-4.6z"/><path fill="#00a4ef" d="M7 14.4 h4.6 V19 H7z"/><path fill="#ffb900" d="M12.4 14.4 h4.6 V19 h-4.6z"/>` },
  { name: "WPS Office", state: "active run", art: svg`
    <defs><linearGradient id="w1" x1="0" y1="0" x2="1" y2="1"><stop offset="0" stop-color="#7a5cff"/><stop offset=".5" stop-color="#d63bd0"/><stop offset="1" stop-color="#ff2e55"/></linearGradient></defs>
    <circle cx="12" cy="12" r="12" fill="url(#w1)"/>
    <path fill="none" stroke="#fff" stroke-width="1.7" stroke-linejoin="round" d="M4.5 8.5 H9 L11.5 16 L13.5 9.5 L15 16 L18 9 M5 8.8 L8.5 16.5 L12 9.5"/><circle cx="18.3" cy="6.8" r="1.2" fill="#fff"/>` },
  { name: "Skype", state: "run", art: svg`
    <circle cx="8.5" cy="8.5" r="7.5" fill="#1598dd"/><circle cx="14" cy="15" r="8.5" fill="#0f86d3"/><circle cx="11.5" cy="11.5" r="9.5" fill="#1391dc"/>
    <path fill="none" stroke="#fff" stroke-width="2" stroke-linecap="round" d="M14.5 7 C13 4.5 7.5 4.8 7.5 7.5 C7.5 10.5 14.8 9.2 14.8 12.7 C14.8 15.7 8.7 15.8 7.3 13"/>
    <circle cx="17" cy="18" r="7" fill="#e8432e"/><text class="badge" x="17" y="21.8" font-size="11">1</text>` },
  { name: "Mail", art: svg`
    <path fill="#0a5ca8" d="M0 8 L12 1 L24 8 V14 H0z"/><path fill="#eef2f5" d="M2 8 H22 V15 L12 17 L2 15z"/>
    <path fill="#28a8ea" d="M0 8.5 L12 16 L0 23z"/><path fill="#35c3f3" d="M24 8.5 L12 16 L24 23z"/><path fill="#1e90de" d="M0 23 V22 L12 14.5 L24 22 V23z"/>` },
  { name: "Visual Studio Code", state: "run split", art: svg`
    <path fill="#1f8fe0" d="M17 0 L24 3 V21 L17 24 L5.5 13.5 L2 17 L0 15.5 L3.5 12 L0 8.5 L2 7 L5.5 10.5z"/><path fill="#0a6ab6" d="M17 0 L5.5 10.5 L2 7 L0 8.5 L17 20.5 V17.5 L9.5 12 L17 6.5z"/>
    <path fill="#35a9f2" d="M17 0 L24 3 V21 L17 24z"/><path fill="#1d1d1d" d="M17 7 V17 L10.5 12z"/>` },
  { name: "Brave", art: svg`
    <path fill="#fb4a1f" d="M7 0 H17 L19.5 2.8 L22 3 L21.3 7 L22 8.5 L19.2 18.5 L12 24 L4.8 18.5 L2 8.5 L2.7 7 L2 3 L4.5 2.8z"/>
    <path fill="#fff" d="M5 6.5 L8 4.5 L12 5.2 L16 4.5 L19 6.5 L18.5 9.5 L16 13.5 L17 16 L12 20 L7 16 L8 13.5 L5.5 9.5z"/>
    <path fill="#fb4a1f" d="M7 8.5 L10.5 8 L11 12 L9.5 13 z M17 8.5 L13.5 8 L13 12 L14.5 13z M9.3 15.2 L12 16.8 L14.7 15.2 L12 14.2z"/>` },
  { name: "Chrome", state: "run", art: svg`
    <circle cx="12" cy="12" r="12" fill="#fbc116"/><path fill="#e33b2e" d="M12 12 L1.6 6 A12 12 0 0 1 22.4 6 H12z"/><path fill="#229342" d="M1.6 6 A12 12 0 0 0 12 24 L17.2 15 L12 12 L6.8 15z"/>
    <circle cx="12" cy="12" r="6" fill="#fff"/><circle cx="12" cy="12" r="4.8" fill="#2b6fe8"/>` },
  { name: "XAMPP", state: "run", art: svg`
    <rect width="24" height="24" rx="2" fill="#e8702a"/><rect x="1" y="1" width="22" height="3" fill="#f7a878"/>
    <g fill="none" stroke="#fff" stroke-width="2.6" stroke-linejoin="round">
      <path d="M9.8 12.3 H14.2"/>
      <path d="M9.8 8.2 A2.6 2.6 0 1 0 5.8 11.2 L6.4 12.3 L5.4 14 A2.7 2.7 0 1 0 9.8 17 Z"/>
      <path d="M14.2 8.2 A2.6 2.6 0 1 1 18.2 11.2 L17.6 12.3 L18.6 14 A2.7 2.7 0 1 1 14.2 17 Z"/>
    </g>` },
];

@customElement("task-bar")
export class TaskBar extends LitElement {
  static styles = [base, css`
    :host { display: flex; height: 40px; background: #1d1d1d; color: #f2f2f2; }
    .start { width: 48px; }
    .search { display: flex; align-items: center; width: 288px; padding: 0 1px 0 12px; background: #f1f1f1; border: 1px solid #c4c4c4; border-left: 0; color: #222; }
    .q { flex: 1; min-width: 0; height: 100%; padding: 0 0 0 12px; border: 0; background: none; font-size: 14px; outline: 0; }
    .q::placeholder { color: #404040; opacity: 1; }
    .view { width: 48px; margin: 0 3px 0 0; }
    .apps { display: flex; gap: 1px; }
    .app { width: 48px; border-bottom: 2px solid transparent; padding-top: 1px; }
    .run { border-image: linear-gradient(90deg, transparent 4px, #76b9ed 4px 44px, transparent 44px) 2; }
    .split { border-image: linear-gradient(90deg, transparent 4px, #76b9ed 4px 36px, #5585ab 36px 44px, transparent 44px) 2; }
    .active { background: #4a4a4a; border-image: none; border-bottom-color: #76b9ed; }
    .tray { display: flex; align-items: stretch; margin-left: auto; font-size: 11px; }
    .weather { gap: 8px; font-size: 13px; margin-right: 19px; }
    .t { width: 24px; }
    .two { flex-direction: column; line-height: 17px; }
    .lang { width: 38px; }
    .clock { width: 62px; }
    .notes { width: 43px; margin-right: 6px; }
    .show { width: 4px; border-left: 1px solid #777; }
  `];
  render() {
    return html`
      <button class="start" aria-label="Start">${draw(16, 16, svg`<path stroke="none" fill="#fff" d="M0 2.2 L7 1.2 V7.5 H0z M8 1 L16 0 V7.5 H8z M0 8.5 H7 V14.8 L0 13.8z M8 8.5 H16 V16 L8 15z"/>`)}</button>
      <label class="search">
        ${draw(16, 16, svg`<circle cx="10" cy="6" r="5" stroke-width="1.3"/><path stroke-width="1.3" d="M6.3 9.7 L.6 15.4"/>`)}
        <input class="q" placeholder="Type here to search" aria-label="Type here to search">
        ${draw(76, 32, svg`
          <defs><radialGradient id="sun"><stop offset="0" stop-color="#ffd23c"/><stop offset="1" stop-color="#fbb62c"/></radialGradient></defs>
          <path stroke="#2c2f63" stroke-width="1.4" stroke-dasharray="3 2" d="M17 11 H28 M54 12 H62 M16 20 C26 25 54 25 62 20"/>
          <g stroke="#2c2f63" stroke-width="1.3"><path d="M14 3 L3 28 M73 3 L62 28"/></g>
          <g stroke="none">
            <path fill="#f5912b" d="M42 1 l3.5 2.4 4.2 -.4 2 3.6 3.8 1.8 -.2 4.2 2.2 3.6 -2.2 3.6 .2 4.2 -3.8 1.8 -2 3.6 -4.2 -.4 -3.5 2.4 -3.5 -2.4 -4.2 .4 -2 -3.6 -3.8 -1.8 .2 -4.2 -2.2 -3.6 2.2 -3.6 -.2 -4.2 3.8 -1.8 2 -3.6 4.2 .4z"/>
            <circle cx="42" cy="16" r="12" fill="url(#sun)"/>
            <circle cx="9" cy="16" r="8.5" fill="#2e79b5"/><path fill="#5ca83c" d="M4 10 C8 7 10 9 11 12 C8 14 7 17 3 16z M10 17 C14 15 16 17 15 21 C12 24 10 22 10 17z"/>
            <circle cx="67" cy="16" r="8.5" fill="#2e79b5"/><path fill="#5ca83c" d="M66 9 C71 7 73 11 72 14 C69 16 66 13 66 9z M60 14 C64 14 66 18 64 23 C61 22 59 18 60 14z"/>
          </g>
          <path stroke="#2c2f63" stroke-width="1.4" stroke-dasharray="3 2" d="M30 22 H54"/>`)}
      </label>
      <button class="view" aria-label="Task view">${draw(18, 16, svg`<path stroke-width="1.2" d="M1 0 V2.5 H11.5 V0 M1 5.5 H11.5 V11 H1z M1 16 V13.5 H11.5 V16 M15.5 0 V5 M15.5 9 V16"/><path stroke="none" fill="#fff" d="M14 5.5 h3 v3 h-3z"/>`)}</button>
      <div class="apps">${apps.map((a) => html`<button class="app ${a.state ?? ""}" aria-label=${a.name}>
        <svg class="ico" width="24" height="24" viewBox="0 0 24 25" aria-hidden="true">${a.art}</svg></button>`)}</div>
      <div class="tray">
        <button class="weather">
          ${draw(26, 22, svg`<path stroke="none" fill="#bcd4fb" d="M6 21 a5.5 5.5 0 0 1 -.5 -11 a7.5 7.5 0 0 1 14 .5 a5.2 5.2 0 0 1 .5 10.5z"/><path stroke="none" fill="#8fb4f2" d="M2 18 C8 21 18 19 24 15.5 a5.2 5.2 0 0 1 -4 5.5 H6 a5.5 5.5 0 0 1 -4 -3z"/>
            <circle cx="18" cy="6.3" r="6" fill="#d1301f" stroke="none"/><text class="badge" x="18" y="9.8" font-size="9">1</text>`)}
          <span>14°C</span><span>Cloudy</span>
        </button>
        <button class="t" aria-label="Hidden icons">${draw(12, 12, svg`<path stroke-width="1.3" d="M1 9 L6 3.5 L11 9"/>`)}</button>
        <button class="t" aria-label="Camera">${draw(14, 16, svg`<path stroke-width="1.2" d="M2 4.5 H9 V11.5 H2z M9 7.5 L12.5 5 V11 L9 8.5 M3 1.8 C5 .3 7.5 .3 9.5 1.8 M3 14.2 C5 15.7 7.5 15.7 9.5 14.2"/>`)}</button>
        <button class="t" aria-label="Network">${draw(17, 15, svg`<path stroke-width="1.2" d="M5 2 H16 V10.5 H4 V7 M10 10.5 V14 M6.5 14 H13.5 M1 1 H5 V6 H1z"/>`)}</button>
        <button class="t" aria-label="Volume muted">${draw(16, 12, svg`<path stroke-width="1.1" d="M1 4 H3.5 L7 .8 V11.2 L3.5 8 H1z M10 3.5 L15 8.5 M15 3.5 L10 8.5"/>`)}</button>
        <button class="two lang"><span>ENG</span><span>US</span></button>
        <button class="two clock"><span>11:43 AM</span><span>1/3/2024</span></button>
        <button class="notes" aria-label="2 notifications">${draw(26, 26, svg`
          <path stroke="none" fill="#fff" d="M2 1 H18 V14 H8 L5 17 V14 H2z"/><path stroke="#1d1d1d" stroke-width="1.3" d="M5 4.5 H15 M5 7.5 H15 M5 10.5 H12"/>
          <circle cx="17.5" cy="17" r="7.5" fill="#3b3b3b" stroke="#8a8a8a"/><text class="badge" x="17.5" y="21" font-size="11" font-weight="600">2</text>`)}</button>
        <button class="show" aria-label="Show desktop"></button>
      </div>
    `;
  }
}

@customElement("app-root")
export class AppRoot extends LitElement {
  static styles = [base, css`
    :host { display: flex; flex-direction: column; height: 100vh; background: #eeeeee; color: #222; font: 11px "Noto Sans", "Open Sans", sans-serif; overflow: hidden; }
    .work { display: flex; flex: 1; min-height: 0; overflow: hidden; }
  `];
  render() {
    return html`
      <title-bar></title-bar>
      <menu-bar></menu-bar>
      <tool-ribbon></tool-ribbon>
      <div class="work"><side-panel></side-panel><doc-viewer></doc-viewer><tool-rail></tool-rail></div>
      <status-bar></status-bar>
      <task-bar></task-bar>
    `;
  }
}
